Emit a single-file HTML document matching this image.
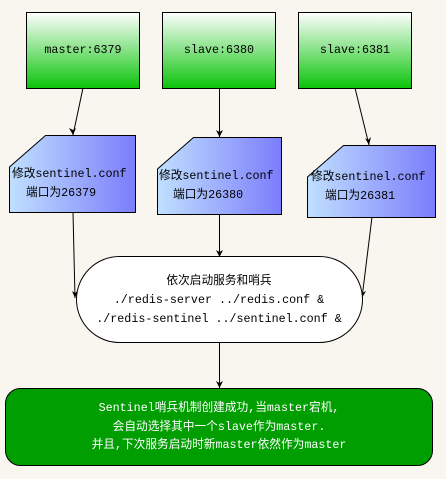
<!DOCTYPE html>
<html><head><meta charset="utf-8"><style>
html,body{margin:0;padding:0;background:#f9f6f0;}
svg{display:block;}
text{font-family:"Liberation Mono","Noto Sans CJK SC",monospace;font-size:11.7px;}
</style></head><body>
<svg width="446" height="479" viewBox="0 0 446 479" xmlns="http://www.w3.org/2000/svg">
<defs>
<linearGradient id="g" x1="0" y1="0" x2="0" y2="1"><stop offset="0" stop-color="#ffffff"/><stop offset="1" stop-color="#0ac40a"/></linearGradient>
<linearGradient id="b" x1="0" y1="0" x2="1" y2="0"><stop offset="0" stop-color="#c0e0ff"/><stop offset="1" stop-color="#7b7dfb"/></linearGradient>
</defs>
<rect x="26.5" y="12.5" width="113" height="76" fill="url(#g)" stroke="#000"/>
<rect x="162.5" y="12.5" width="113" height="76" fill="url(#g)" stroke="#000"/>
<rect x="298.5" y="12.5" width="113" height="76" fill="url(#g)" stroke="#000"/>
<text x="83" y="53" text-anchor="middle">master:6379</text>
<text x="219" y="53" text-anchor="middle">slave:6380</text>
<text x="355" y="53" text-anchor="middle">slave:6381</text>
<g stroke="#000" fill="none">
<path d="M83,88 L73,135"/>
<path d="M219.5,88 L219.5,137"/>
<path d="M355,88 L369,145"/>
<path d="M73,212 L75,298"/>
<path d="M219.5,214 L219.5,257"/>
<path d="M372,217 L362,298"/>
<path d="M219.5,343 L219.5,388"/>
</g>
<g fill="#000">
<path d="M69,128 L73,135 L76,128 L73,130 Z"/>
<path d="M216,130 L219.5,137 L223,130 L219.5,132 Z"/>
<path d="M365,138 L369,145 L371,137 L368,140 Z"/>
<path d="M72,291 L75,298 L78,291 L75,293 Z"/>
<path d="M216,250 L219.5,257 L223,250 L219.5,252 Z"/>
<path d="M359,290 L362,298 L366,291 L362,293 Z"/>
<path d="M216,381 L219.5,388 L223,381 L219.5,383 Z"/>
</g>
<path d="M45.5,135.5 H135.5 V212.5 H9.5 V167 Z" fill="url(#b)" stroke="#000"/>
<path d="M193.5,137.5 H281.5 V214.5 H157.5 V169 Z" fill="url(#b)" stroke="#000"/>
<path d="M343.5,145.5 H435.5 V217.5 H307.5 V177 Z" fill="url(#b)" stroke="#000"/>
<text x="12" y="177">修改sentinel.conf</text>
<text x="26" y="196">端口为26379</text>
<text x="159" y="179">修改sentinel.conf</text>
<text x="173" y="198">端口为26380</text>
<text x="311" y="180">修改sentinel.conf</text>
<text x="325" y="199">端口为26381</text>
<rect x="76.5" y="256.5" width="286" height="86" rx="43" ry="43" fill="#fff" stroke="#000"/>
<text x="219" y="284" text-anchor="middle">依次启动服务和哨兵</text>
<text x="219" y="303" text-anchor="middle">./redis-server ../redis.conf &amp;</text>
<text x="219" y="322" text-anchor="middle">./redis-sentinel ../sentinel.conf &amp;</text>
<rect x="5.5" y="388.5" width="427" height="77" rx="15" ry="15" fill="#009e00" stroke="#000"/>
<g fill="#fff">
<text x="219" y="411" text-anchor="middle">Sentinel哨兵机制创建成功,当master宕机,</text>
<text x="219" y="430" text-anchor="middle">会自动选择其中一个slave作为master.</text>
<text x="219" y="448" text-anchor="middle">并且,下次服务启动时新master依然作为master</text>
</g>
</svg>
</body></html>
